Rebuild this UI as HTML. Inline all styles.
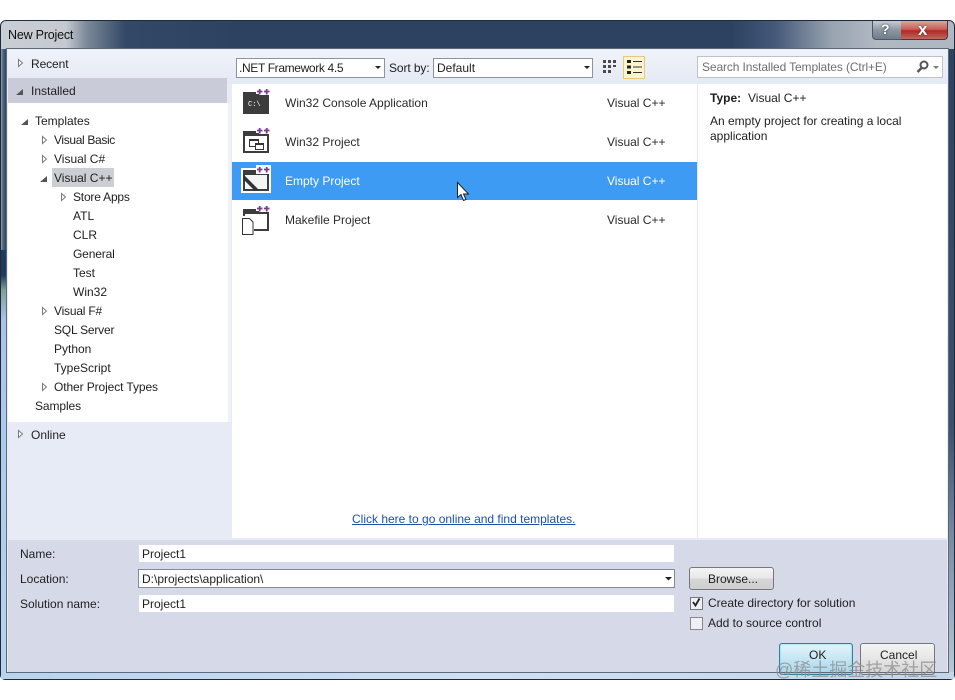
<!DOCTYPE html>
<html><head><meta charset="utf-8">
<style>
html,body{margin:0;padding:0;width:955px;height:700px;overflow:hidden;background:#fff}
body{font-family:"Liberation Sans","Noto Sans CJK SC",sans-serif;font-size:12px;color:#1e1e1e;position:relative}
.a{position:absolute;white-space:nowrap}
.t{position:absolute;white-space:nowrap;line-height:16px;height:16px}
.b{position:absolute}
svg{position:absolute;overflow:visible}
</style></head><body>
<!-- window frame -->
<div class="b" style="left:0;top:20px;width:955px;height:660px;background:#1d2b3f;border-radius:6px 6px 5px 5px"></div>
<div class="b" style="left:1px;top:21px;width:953px;height:658px;border-radius:5px;background:linear-gradient(90deg,#8e9aa8 0,#54677f 2px,#2c4362 5px,#2c4362 100%)"></div>
<div class="b" style="left:1px;top:21px;width:953px;height:28px;border-radius:5px 5px 0 0;background:linear-gradient(90deg,#c9ced4 0,#c5cad0 65px,#7d8a9a 85px,#324866 125px,#2c4260 240px,#2c4260 730px,#45597a 775px,#98a3b0 830px,#b0b8c2 875px,#aeb7c2 100%)"></div>
<div class="b" style="left:1px;top:250px;width:6px;height:429px;background:linear-gradient(180deg,#1f3b5c 0,#1f3b5c 25px,#7f9f99 40px,#a9c6e6 70px,#b9d3ee 100%)"></div>
<div class="b" style="left:948px;top:49px;width:6px;height:630px;background:linear-gradient(180deg,#2c4260 0,#3b506e 60%,#7f93a8 80%,#b9cbdc 100%)"></div>
<div class="b" style="left:1px;top:672px;width:953px;height:7px;background:linear-gradient(90deg,#b9d3ee,#cfe0f2 50%,#c5d6e8)"></div>
<div class="t" style="left:8px;top:27px;color:#101010;font-size:12.5px;letter-spacing:-.2px">New Project</div>
<!-- caption buttons -->
<div class="b" style="left:872px;top:21px;width:68px;height:18px;border:1px solid #4a5a6e;border-top:0;border-radius:0 0 4px 4px;background:linear-gradient(180deg,#c8cdd3,#8d97a3 50%,#707c8a)"></div>
<div class="b" style="left:901px;top:21px;width:46px;height:18px;border:1px solid #5a3030;border-top:0;border-left:0;border-radius:0 0 4px 0;background:linear-gradient(180deg,#d9a79c,#c9605a 45%,#b02a22 55%,#bc6a60)"></div>
<div class="a" style="left:881px;top:21px;font-weight:bold;font-size:14px;color:#fff;text-shadow:0 0 2px #222">?</div>
<div class="a" style="left:918px;top:20px;font-weight:bold;font-size:17px;color:#fff;text-shadow:0 0 2px #622">x</div>
<!-- client -->
<div class="b" style="left:7px;top:49px;width:941px;height:623px;background:#e6ebf6;outline:1px solid #5c6a7a;outline-offset:0"></div>
<div class="b" style="left:8px;top:50px;width:939px;height:34px;background:linear-gradient(180deg,#f0f3fa,#e4e9f4)"></div>
<!-- left -->
<div class="b" style="left:8px;top:78px;width:219px;height:25px;background:#c9cbd9"></div>
<div class="b" style="left:8px;top:103px;width:220px;height:319px;background:#fff"></div>
<div class="b" style="left:228px;top:103px;width:3px;height:319px;background:#eef1f8"></div>
<div class="b" style="left:52px;top:168px;width:62px;height:19px;background:#cdcdd4"></div>
<!-- tree text -->
<div class="t" style="left:31px;top:56px;letter-spacing:-.1px">Recent</div>
<div class="t" style="left:31px;top:83px">Installed</div>
<div class="t" style="left:35px;top:113px">Templates</div>
<div class="t" style="left:54px;top:132px;letter-spacing:-.35px">Visual Basic</div>
<div class="t" style="left:54px;top:151px">Visual C#</div>
<div class="t" style="left:54px;top:170px">Visual C++</div>
<div class="t" style="left:73px;top:189px;letter-spacing:-.2px">Store Apps</div>
<div class="t" style="left:73px;top:208px">ATL</div>
<div class="t" style="left:73px;top:227px">CLR</div>
<div class="t" style="left:73px;top:246px;letter-spacing:-.15px">General</div>
<div class="t" style="left:73px;top:265px">Test</div>
<div class="t" style="left:73px;top:284px">Win32</div>
<div class="t" style="left:54px;top:303px;letter-spacing:-.2px">Visual F#</div>
<div class="t" style="left:54px;top:322px;letter-spacing:-.2px">SQL Server</div>
<div class="t" style="left:54px;top:341px">Python</div>
<div class="t" style="left:54px;top:360px">TypeScript</div>
<div class="t" style="left:54px;top:379px;letter-spacing:-.1px">Other Project Types</div>
<div class="t" style="left:35px;top:398px;letter-spacing:-.1px">Samples</div>
<div class="t" style="left:31px;top:427px">Online</div>
<!-- tree arrows -->
<svg width="955" height="700" style="left:0;top:0">
<g fill="#fff" stroke="#7a7a7a" stroke-width="1">
<path d="M18.500 59.500l4 3.500-4 3.500z"/><path d="M18.500 430.500l4 3.500-4 3.500z"/>
<path d="M42.500 136.500l4 3.500-4 3.500z"/><path d="M42.500 155.500l4 3.500-4 3.500z"/><path d="M42.500 307.500l4 3.500-4 3.500z"/><path d="M42.500 383.500l4 3.500-4 3.500z"/>
<path d="M61.500 193.500l4 3.500-4 3.500z"/>
</g>
<g fill="#555">
<path d="M16 95l7-6v6z"/><path d="M21 125l7-6v6z"/><path d="M40 182l7-6v6z"/>
</g>
</svg>
<!-- toolbar -->
<div class="b" style="left:236px;top:58px;width:147px;height:18px;background:#fff;border:1px solid #8c939c"></div>
<div class="t" style="left:239px;top:60px;letter-spacing:-.35px">.NET Framework 4.5</div>
<div class="t" style="left:389px;top:60px;letter-spacing:-.1px">Sort by:</div>
<div class="b" style="left:433px;top:58px;width:158px;height:18px;background:#fff;border:1px solid #8c939c"></div>
<div class="t" style="left:437px;top:60px">Default</div>
<svg width="955" height="700" style="left:0;top:0">
<path d="M375 66h6l-3 3z M584 66h6l-3 3z" fill="#222"/>
<g fill="#4a4a4a"><path d="M603 60h3v3h-3z M608 60h3v3h-3z M613 60h3v3h-3z M603 65h3v3h-3z M608 65h3v3h-3z M613 65h3v2h-3z M603 70h3v3h-3z M608 70h3v3h-3z"/></g>
</svg>
<div class="b" style="left:623px;top:56px;width:20px;height:21px;background:#fdf3cf;border:1px solid #e8c97c"></div>
<svg width="955" height="700" style="left:0;top:0">
<path d="M627 60h4v3h-4z M627 65.500h4v3h-4z M627 71h4v3h-4z" fill="#222"/>
<path d="M633 61.500h9 M633 67h9 M633 72.500h9" stroke="#333" stroke-width="1"/>
</svg>
<!-- search -->
<div class="b" style="left:697px;top:56px;width:244px;height:20px;background:#fff;border:1px solid #bcc1cb"></div>
<div class="t" style="left:702px;top:59px;color:#6f6f6f;letter-spacing:-.12px">Search Installed Templates (Ctrl+E)</div>
<svg width="955" height="700" style="left:0;top:0">
<circle cx="924" cy="65" r="3.500" fill="none" stroke="#555" stroke-width="2"/><path d="M921.500 68l-4 4" stroke="#555" stroke-width="2.500"/>
<path d="M933 66h6l-3 3z" fill="#777"/>
</svg>
<!-- center list -->
<div class="b" style="left:232px;top:84px;width:465px;height:454px;background:#fff"></div>
<div class="b" style="left:698px;top:84px;width:249px;height:454px;background:#fff"></div>
<div class="b" style="left:232px;top:162px;width:465px;height:38px;background:#3d9bf3"></div>
<div class="t" style="left:285px;top:95px;color:#2a2a2a">Win32 Console Application</div>
<div class="t" style="left:285px;top:134px;color:#2a2a2a">Win32 Project</div>
<div class="t" style="left:285px;top:173px;color:#fff">Empty Project</div>
<div class="t" style="left:285px;top:212px;color:#2a2a2a">Makefile Project</div>
<div class="t" style="left:607px;top:95px;color:#2a2a2a">Visual C++</div>
<div class="t" style="left:607px;top:134px;color:#2a2a2a">Visual C++</div>
<div class="t" style="left:607px;top:173px;color:#fff">Visual C++</div>
<div class="t" style="left:607px;top:212px;color:#2a2a2a">Visual C++</div>
<svg width="955" height="700" style="left:0;top:0">
<!-- icon 1 -->
<path d="M243 92h16v3h10v19h-26z" fill="#3c3c3c"/>
<path d="M256 87h15v7h-15z" fill="#fff"/>
<g stroke="#7b3c8f" stroke-width="1.800"><path d="M257 91.500h5.500M259.700 89v5.500M264 91.500h5.500M266.700 89v5.500"/></g>
<!-- icon 2 -->
<path d="M243 131h16v3h10v19h-26z" fill="#3c3c3c"/><path d="M245 136h22v15h-22z" fill="#fff"/>
<path d="M256 126h15v7h-15z" fill="#fff"/>
<g stroke="#7b3c8f" stroke-width="1.800"><path d="M257 130.500h5.500M259.700 128v5.500M264 130.500h5.500M266.700 128v5.500"/></g>
<path d="M249.500 139.500h9v7h-9z" fill="#fff" stroke="#333"/>
<path d="M255.500 143.500h8v6h-8z" fill="#fff" stroke="#333"/><path d="M249.500 139.500h9v1.500h-9zM255.500 143.500h8v1.500h-8z" fill="#333"/>
<!-- icon 3 -->
<path d="M241 168h17v3h13v22h-30z" fill="#fff"/><path d="M243 170h14v3h12v18h-26z" fill="#3c3c3c"/>
<path d="M245 175h22v14h-22z" fill="#f3f4f6"/><path d="M243 174l17 17h-5l-12-12z" fill="#333"/>
<path d="M256 165h15v9h-15z" fill="#fff"/>
<g stroke="#7b3c8f" stroke-width="1.800"><path d="M257 169.500h5.500M259.700 167v5.500M264 169.500h5.500M266.700 167v5.500"/></g>
<!-- icon 4 -->
<path d="M243 209h16v3h10v19h-15v-2h13v-15h-22v2h-2z" fill="#3c3c3c"/>
<path d="M256 204h15v7h-15z" fill="#fff"/>
<path d="M242.500 218.500h7l3.500 3.500v12.500h-10.500z" fill="#fff" stroke="#333"/>
<g stroke="#7b3c8f" stroke-width="1.800"><path d="M257 208.500h5.500M259.700 206v5.500M264 208.500h5.500M266.700 206v5.500"/></g>
<text x="248" y="106" font-family="Liberation Mono" font-size="7" fill="#fff">C:\</text>
<!-- cursor -->
<path d="M457.500 182.500v15l3.500-3 2.500 6 2.500-1-2.500-5.500h5z" fill="#fff" stroke="#222" stroke-width="1"/>
</svg>
<!-- details -->
<div class="t" style="left:710px;top:90px;font-weight:bold">Type:</div>
<div class="t" style="left:748px;top:90px">Visual C++</div>
<div class="t" style="left:710px;top:113px">An empty project for creating a local</div>
<div class="t" style="left:710px;top:128px">application</div>
<div class="t" style="left:352px;top:511px;color:#1f4fa8;text-decoration:underline">Click here to go online and find templates.</div>
<!-- bottom -->
<div class="b" style="left:8px;top:540px;width:939px;height:132px;background:#d6d9e7"></div>
<div class="t" style="left:20px;top:546px">Name:</div>
<div class="t" style="left:20px;top:571px">Location:</div>
<div class="t" style="left:20px;top:596px">Solution name:</div>
<div class="b" style="left:139px;top:545px;width:535px;height:17px;background:#fff"></div>
<div class="t" style="left:142px;top:546px">Project1</div>
<div class="b" style="left:138px;top:569px;width:535px;height:17px;background:#fff;border:1px solid #848a94"></div>
<div class="t" style="left:142px;top:571px">D:\projects\application\</div>
<div class="b" style="left:139px;top:595px;width:535px;height:17px;background:#fff"></div>
<div class="t" style="left:142px;top:596px">Project1</div>
<svg width="955" height="700" style="left:0;top:0"><path d="M665 577h7l-3.500 3.500z" fill="#222"/></svg>
<!-- Buttons -->
<div class="b" style="left:689px;top:567px;width:83px;height:21px;border:1px solid #777;border-radius:3px;background:linear-gradient(180deg,#f4f4f4,#e8e8e8 48%,#d6d6d6 52%,#cfcfcf)"></div>
<div class="t" style="left:708px;top:571px">Browse...</div>
<div class="b" style="left:690px;top:597px;width:11px;height:11px;background:#eef0f6;border:1px solid #777"></div>
<svg width="955" height="700" style="left:0;top:0"><path d="M693 602l2.500 3.500 4-7" fill="none" stroke="#222" stroke-width="1.800"/></svg>
<div class="t" style="left:708px;top:595px">Create directory for solution</div>
<div class="b" style="left:690px;top:617px;width:11px;height:11px;background:#eef0f6;border:1px solid #888"></div>
<div class="t" style="left:708px;top:615px">Add to source control</div>
<div class="b" style="left:779px;top:643px;width:72px;height:30px;border:1px solid #2f7f9e;border-radius:3px;background:linear-gradient(180deg,#e4f4fb,#bfe3f2 60%,#a9d6ea);box-shadow:inset 0 0 2px #6fd0ee"></div>
<div class="t" style="left:809px;top:647px">OK</div>
<div class="b" style="left:860px;top:643px;width:73px;height:30px;border:1px solid #777;border-radius:3px;background:linear-gradient(180deg,#f4f4f4,#e6e6e6 48%,#d2d2d2)"></div>
<div class="t" style="left:880px;top:647px">Cancel</div>
<div class="b" style="left:7px;top:672px;width:941px;height:1px;background:#5c6a7a"></div>
<div class="a" style="left:775px;top:660px;font-size:18px;line-height:20px;color:#8d8d8d;opacity:.75;font-family:'Liberation Sans','Noto Sans CJK SC',sans-serif">@稀土掘金技术社区</div>
</body></html>
